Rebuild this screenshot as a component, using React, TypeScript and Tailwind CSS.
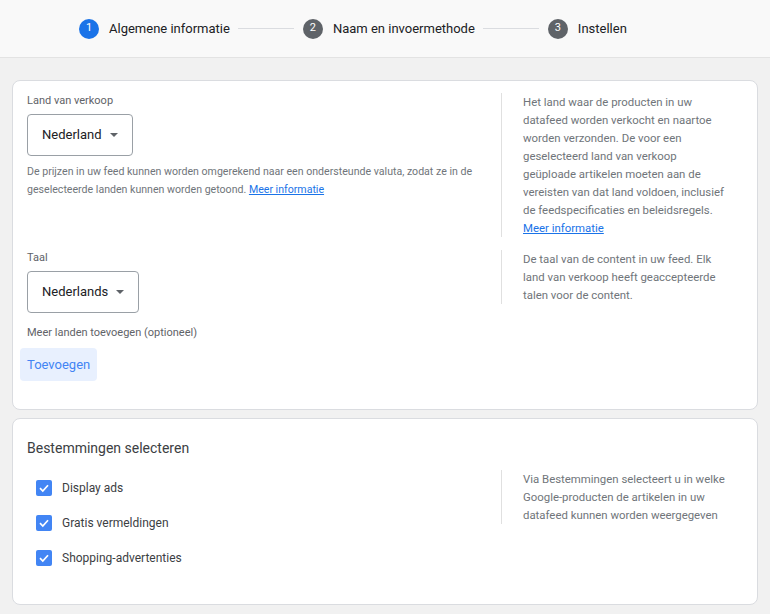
import React from 'react'

const steps = [
  { n: 1, label: 'Algemene informatie', active: true },
  { n: 2, label: 'Naam en invoermethode', active: false },
  { n: 3, label: 'Instellen', active: false },
]

const destinations = ['Display ads', 'Gratis vermeldingen', 'Shopping-advertenties']

export default function App() {
  return (
    <div className="min-h-screen w-[770px] bg-[#f1f1f1] font-['Roboto',sans-serif] pb-[10px]">
      {/* Stepper */}
      <div className="h-[58px] border-b border-[#e3e3e3] bg-[#f9f9f9] flex items-center pl-[79px]">
        {steps.map((s, i) => (
          <div key={s.n} className="flex items-center">
            {i > 0 && <div className="ml-[8px] mr-[9px] w-[56px] h-px bg-[#dadce0]" />}
            <div
              className={`w-[20px] h-[20px] rounded-full flex items-center justify-center text-[11px] text-white ${
                s.active ? 'bg-[#1a73e8]' : 'bg-[#5f6368]'
              }`}
            >
              {s.n}
            </div>
            <span className="ml-[10px] text-[13px] text-[#202124]">{s.label}</span>
          </div>
        ))}
      </div>

      {/* Card 1 */}
      <div className="mx-3 mt-[22px] rounded-lg border border-[#dadce0] bg-white pt-[12px] pb-[28px]">
        <div className="flex items-start">
          <div className="flex-1 pl-[14px] pr-[15px]">
            <Label>Land van verkoop</Label>
            <Dropdown value="Nederland" />
            <p className="mt-[7px] text-[10.6px] leading-[18px] text-[#70757a]">
              De prijzen in uw feed kunnen worden omgerekend naar een ondersteunde valuta, zodat ze in de
              geselecteerde landen kunnen worden getoond.{' '}
              <a className="text-[#1a73e8] underline">Meer informatie</a>
            </p>
          </div>
          <Aside>
            Het land waar de producten in uw datafeed worden verkocht en naartoe worden verzonden. De voor een
            geselecteerd land van verkoop geüploade artikelen moeten aan de vereisten van dat land voldoen, inclusief
            de feedspecificaties en beleidsregels.{' '}
            <a className="text-[#1a73e8] underline">Meer informatie</a>
          </Aside>
        </div>

        <div className="flex items-start mt-[13px]">
          <div className="flex-1 pl-[14px] pr-[15px]">
            <Label>Taal</Label>
            <Dropdown value="Nederlands" />
            <div className="mt-[12px]">
              <Label>Meer landen toevoegen (optioneel)</Label>
            </div>
            <button className="mt-[7px] -ml-[7px] h-[33px] px-[7px] rounded bg-[#e8f0fe] text-[13px] text-[#4285f4]">
              Toevoegen
            </button>
          </div>
          <Aside>De taal van de content in uw feed. Elk land van verkoop heeft geaccepteerde talen voor de content.</Aside>
        </div>
      </div>

      {/* Card 2 */}
      <div className="mx-3 mt-[8px] rounded-lg border border-[#dadce0] bg-white pt-[19px] pb-[29px]">
        <h2 className="pl-[14px] text-[14px] leading-[20px] text-[#3c4043]">Bestemmingen selecteren</h2>
        <div className="flex items-start mt-[12px]">
          <div className="flex-1 pl-[23px]">
            {destinations.map(d => (
              <div key={d} className="h-[35px] flex items-center">
                <Checkbox />
                <span className="ml-[10px] text-[12px] text-[#3c4043]">{d}</span>
              </div>
            ))}
          </div>
          <Aside>Via Bestemmingen selecteert u in welke Google-producten de artikelen in uw datafeed kunnen worden weergegeven</Aside>
        </div>
      </div>
    </div>
  )
}

function Label({ children }: { children: React.ReactNode }) {
  return <div className="text-[11px] leading-[16px] text-[#5f6368]">{children}</div>
}

function Aside({ children }: { children: React.ReactNode }) {
  return (
    <div className="w-[256px] shrink-0 border-l border-[#e0e0e0] pl-[21px] pr-[27px] text-[11.4px] leading-[18px] text-[#70757a]">
      {children}
    </div>
  )
}

function Dropdown({ value }: { value: string }) {
  return (
    <div className="mt-[5px] inline-flex items-center h-[42px] px-[14px] rounded border border-[#9aa0a6] bg-white">
      <span className="text-[13px] text-[#202124]">{value}</span>
      <svg className="ml-[8px]" width="8" height="4" viewBox="0 0 10 5">
        <path d="M0 0h10L5 5z" fill="#5f6368" />
      </svg>
    </div>
  )
}

function Checkbox() {
  return (
    <div className="w-[16px] h-[16px] rounded-[2px] bg-[#4285f4] flex items-center justify-center">
      <svg width="12" height="12" viewBox="0 0 12 12">
        <path d="M2 6.2 L4.8 9 L10 3.2" fill="none" stroke="white" strokeWidth="1.7" />
      </svg>
    </div>
  )
}
